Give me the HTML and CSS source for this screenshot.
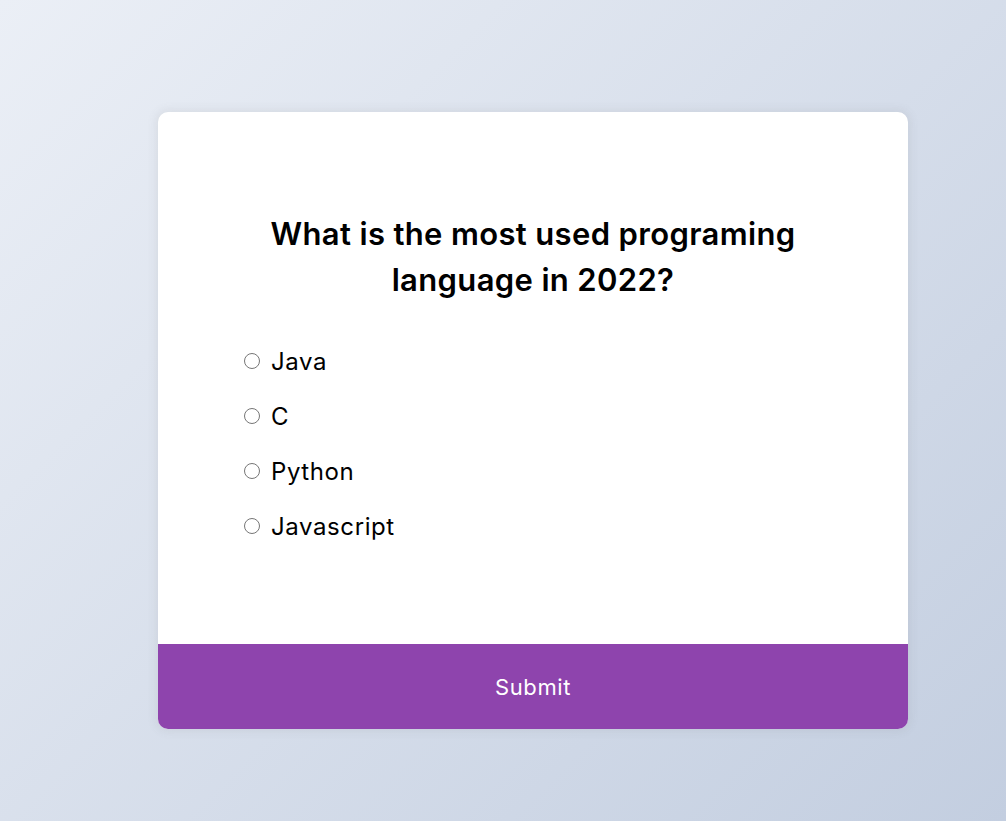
FILE: index.html
```html
<!DOCTYPE html>
<html lang="en">
<head>
<meta charset="UTF-8">
<title>Quiz</title>
<link rel="stylesheet" href="styles.css">
</head>
<body>
<div class="page">
  <div class="quiz-container">
    <div class="quiz-header">
      <h2 class="question">What is the most used programing language in 2022?</h2>
      <ul class="answers">
        <li><input type="radio" name="answer" id="a" class="answer"><label for="a">Java</label></li>
        <li><input type="radio" name="answer" id="b" class="answer"><label for="b">C</label></li>
        <li><input type="radio" name="answer" id="c" class="answer"><label for="c">Python</label></li>
        <li><input type="radio" name="answer" id="d" class="answer"><label for="d">Javascript</label></li>
      </ul>
    </div>
    <button class="submit">Submit</button>
  </div>
</div>
</body>
</html>
```
FILE: styles.css
```css
* { box-sizing: border-box; }
html, body { margin: 0; height: 100%; }
body {
  background-color: #c5d0e1;
  background-image: linear-gradient(315deg, #c3cee0 0%, #ebeff6 100%);
  font-family: Inter, "Open Sans", sans-serif;
  overflow: hidden;
}
.page {
  padding: 112px 0 0 158px;
}
.quiz-container {
  width: 750px;
  height: 617px;
  background: #fff;
  border-radius: 10px;
  box-shadow: 0 0 10px 2px rgba(100, 100, 100, 0.1);
  overflow: hidden;
  display: flex;
  flex-direction: column;
}
.quiz-header {
  flex: 1;
  padding: 99px 80px 0 80px;
}
.question {
  margin: 0 auto;
  width: 570px;
  text-align: center;
  font-size: 31px;
  line-height: 46px;
  letter-spacing: 0.35px;
  font-weight: 600;
  color: #000;
}
.answers {
  list-style: none;
  padding: 0;
  margin: 41px 0 0 0;
}
.answers li {
  display: flex;
  align-items: center;
  height: 34px;
  margin-bottom: 21px;
  font-size: 24px;
  letter-spacing: 0.6px;
  color: #000;
}
.answer {
  margin: 0 11px 0 6px;
  width: 16px;
  height: 16px;
}
.submit {
  display: block;
  width: 100%;
  height: 85px;
  border: none;
  background: #8e44ad;
  color: #fff;
  font-family: inherit;
  font-size: 22px;
  letter-spacing: 0.6px;
  cursor: pointer;
}
```
